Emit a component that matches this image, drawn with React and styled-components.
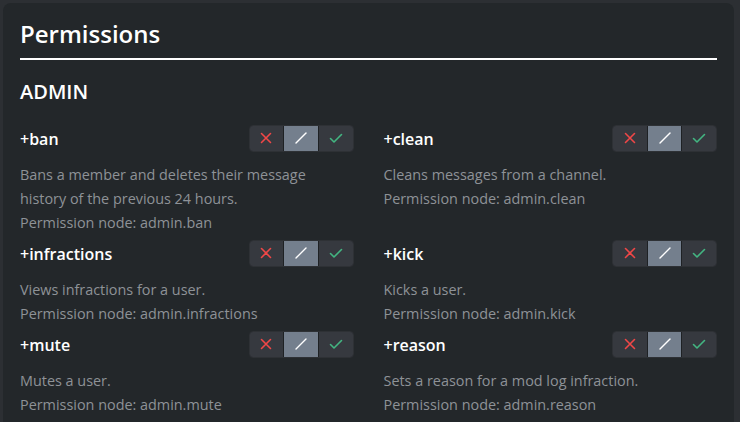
import React from 'react'
import styled, { createGlobalStyle } from 'styled-components'

const GlobalStyle = createGlobalStyle`
  html, body {
    margin: 0;
    padding: 0;
    background: #2c2f33;
    font-family: "Open Sans", "Noto Sans", sans-serif;
    overflow: hidden;
  }
`

const commands = [
  {
    name: '+ban',
    desc: 'Bans a member and deletes their message history of the previous 24 hours.',
    node: 'admin.ban',
  },
  { name: '+clean', desc: 'Cleans messages from a channel.', node: 'admin.clean' },
  { name: '+infractions', desc: 'Views infractions for a user.', node: 'admin.infractions' },
  { name: '+kick', desc: 'Kicks a user.', node: 'admin.kick' },
  { name: '+mute', desc: 'Mutes a user.', node: 'admin.mute' },
  { name: '+reason', desc: 'Sets a reason for a mod log infraction.', node: 'admin.reason' },
]

const Deny = () => (
  <svg width="12" height="12" viewBox="0 0 12 12">
    <path d="M1.5 1.5 L10.5 10.5 M10.5 1.5 L1.5 10.5" stroke="#f04747" strokeWidth="1.6" strokeLinecap="round" />
  </svg>
)

const Neutral = () => (
  <svg width="14" height="14" viewBox="0 0 14 14">
    <path d="M2 12 L12 2" stroke="#ffffff" strokeWidth="1.4" strokeLinecap="round" />
  </svg>
)

const Allow = () => (
  <svg width="14" height="12" viewBox="0 0 14 12">
    <path d="M1.5 6.5 L5 10 L12.5 2.5" stroke="#43b581" strokeWidth="1.6" fill="none" strokeLinecap="round" strokeLinejoin="round" />
  </svg>
)

const Permission = ({ name, desc, node }) => (
  <Item>
    <Header>
      <Name>{name}</Name>
      <Toggle>
        <Segment><Deny /></Segment>
        <Segment $active><Neutral /></Segment>
        <Segment><Allow /></Segment>
      </Toggle>
    </Header>
    <Desc>{desc}</Desc>
    <Node>Permission node: {node}</Node>
  </Item>
)

const App = () => {
  return (
    <Page>
      <GlobalStyle />
      <Panel>
        <Title>Permissions</Title>
        <Section>ADMIN</Section>
        <Grid>
          {commands.map((c) => (
            <Permission key={c.name} {...c} />
          ))}
        </Grid>
      </Panel>
    </Page>
  )
}

export default App

const Page = styled.div`
  padding: 3px 6px 0 3px;
  height: 422px;
  box-sizing: border-box;
`

const Panel = styled.div`
  background: #23272a;
  border-radius: 8px 8px 0 0;
  padding: 14px 17px 20px 17px;
  height: 100%;
  box-sizing: border-box;
`

const Title = styled.h1`
  margin: 0;
  font-size: 24px;
  font-weight: 600;
  color: #ffffff;
  padding-bottom: 8px;
  border-bottom: 2px solid #ffffff;
`

const Section = styled.h2`
  margin: 18px 0 20px 0;
  font-size: 20px;
  font-weight: 600;
  color: #ffffff;
`

const Grid = styled.div`
  display: grid;
  grid-template-columns: 1fr 1fr;
  column-gap: 30px;
  row-gap: 6px;
`

const Item = styled.div`
  display: flex;
  flex-direction: column;
`

const Header = styled.div`
  display: flex;
  align-items: center;
  justify-content: space-between;
  height: 26px;
  margin-bottom: 12px;
`

const Name = styled.span`
  font-size: 16px;
  font-weight: 600;
  color: #ffffff;
  margin-top: 2px;
`

const Toggle = styled.div`
  display: flex;
  width: 105px;
  height: 27px;
  border-radius: 4px;
  overflow: hidden;
  background: #1e2124;
  gap: 1px;
  box-sizing: border-box;
  border: 1px solid #2e3135;
`

const Segment = styled.div`
  flex: 1;
  display: flex;
  align-items: center;
  justify-content: center;
  background: ${(p) => (p.$active ? '#747f8d' : '#36393f')};
`

const Desc = styled.p`
  margin: 0;
  font-size: 14.4px;
  line-height: 24px;
  color: #8e9297;
`

const Node = styled.p`
  margin: 0;
  font-size: 14.4px;
  line-height: 23px;
  color: #8e9297;
`
